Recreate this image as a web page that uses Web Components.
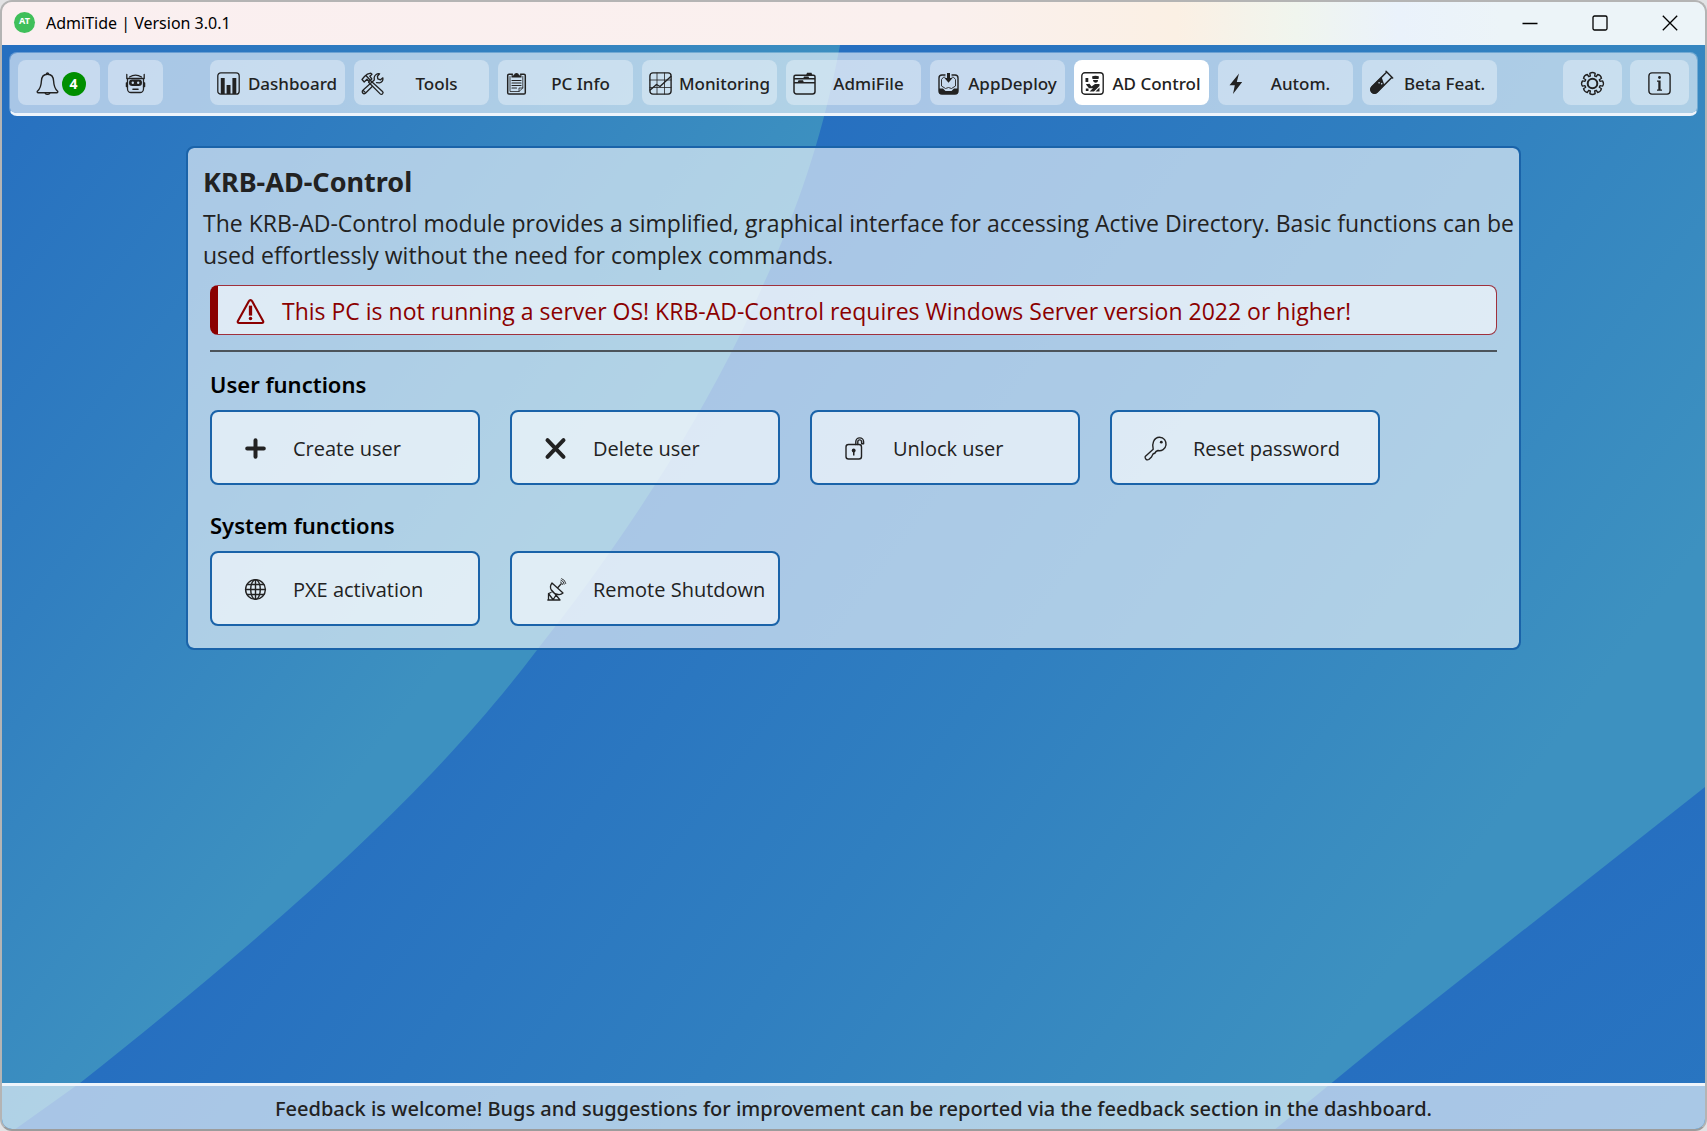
<!DOCTYPE html>
<html lang="en">
<head>
<meta charset="utf-8">
<title>AdmiTide | Version 3.0.1</title>
<style>
  html, body { margin: 0; background: #e2e2e4; }
  body { font-family: "Noto Sans", "Segoe UI", sans-serif; color: #222; }
</style>
</head>
<body>
<at-app>
  <at-titlebar slot="title">AdmiTide | Version 3.0.1</at-titlebar>
  <at-navbar slot="nav">
    <at-nav-button slot="start" icon="bell" label="Notifications" badge="4" size="wide"></at-nav-button>
    <at-nav-button slot="start" icon="robot" label="Assistant" size="narrow"></at-nav-button>
    <at-nav-button icon="chart">Dashboard</at-nav-button>
    <at-nav-button icon="tools">Tools</at-nav-button>
    <at-nav-button icon="clipboard">PC Info</at-nav-button>
    <at-nav-button icon="trend">Monitoring</at-nav-button>
    <at-nav-button icon="filebox">AdmiFile</at-nav-button>
    <at-nav-button icon="inbox">AppDeploy</at-nav-button>
    <at-nav-button icon="control" active>AD Control</at-nav-button>
    <at-nav-button icon="bolt">Autom.</at-nav-button>
    <at-nav-button icon="tube">Beta Feat.</at-nav-button>
    <at-nav-button slot="end" icon="gear" label="Settings" size="medium"></at-nav-button>
    <at-nav-button slot="end" icon="info" label="Information" size="medium"></at-nav-button>
  </at-navbar>
  <at-panel heading="KRB-AD-Control">
    <span slot="intro">The KRB-AD-Control module provides a simplified, graphical interface for accessing Active Directory. Basic functions can be used effortlessly without the need for complex commands.</span>
    <at-alert>This PC is not running a server OS! KRB-AD-Control requires Windows Server version 2022 or higher!</at-alert>
    <at-section heading="User functions">
      <at-action icon="plus">Create user</at-action>
      <at-action icon="cross">Delete user</at-action>
      <at-action icon="unlock">Unlock user</at-action>
      <at-action icon="key">Reset password</at-action>
    </at-section>
    <at-section heading="System functions">
      <at-action icon="globe">PXE activation</at-action>
      <at-action icon="dish">Remote Shutdown</at-action>
    </at-section>
  </at-panel>
  <at-footer slot="footer">Feedback is welcome! Bugs and suggestions for improvement can be reported via the feedback section in the dashboard.</at-footer>
</at-app>

<script>
const S = 'fill="none" stroke="currentColor" stroke-linejoin="round" stroke-linecap="round"';
const ICONS = {
  bell: `<g ${S} stroke-width="1.4"><path d="M11.5 2.2C7.6 2.2 5.6 5 5.4 9C5.2 13.500 4.200 16.800 1.400 19.200C.900 20 1.300 20.800 2.200 20.800H20.800C21.700 20.800 22.100 20 21.600 19.200C18.800 16.800 17.800 13.500 17.600 9C17.400 5 15.400 2.200 11.500 2.200Z"/><path d="M9.300 21.200a2.300 1.700 0 0 0 4.400 0M10.500 2a1 1 0 0 1 2 0"/></g>`,
  robot: `<g ${S} stroke-width="1.3"><path d="M3.500 6.500H19.500V17A3.500 3.500 0 0 1 16 20.500H7A3.500 3.500 0 0 1 3.500 17z"/><path d="M3.500 11H2.400V14.500H3.500M19.500 11H20.600V14.500H19.500M2.800 6.500V2.500M20.200 6.500V2.500M5.500 5C9 2.800 14 2.800 17.500 5"/><path stroke-width="1.600" d="M9 17.300h5"/></g><rect x="5" y="7.500" width="13" height="6.500" rx="3.200" fill="currentColor"/><circle cx="8.800" cy="10.700" r="1.200" fill="#c8dbee"/><circle cx="14.200" cy="10.700" r="1.200" fill="#c8dbee"/>`,
  chart: `<rect x=".8" y=".8" width="21.400" height="21.400" rx="3" ${S} stroke-width="1.300"/><path fill="currentColor" d="M3.800 6h3.900V22h-3.900zM9.600 13h3.900V22h-3.900zM15.400 6h3.900V22h-3.900z"/>`,
  tools: `<g ${S} stroke-width="1.300"><path d="M1 7.500L3.500 4.500C5 2.800 7 1.400 9.800 1.200L11 2.200L8.800 4.200L10.800 7L8 9.600L6 7.200L3.200 10z"/><path d="M9.400 8.600L21.500 19.500A1.600 1.600 0 0 1 19.200 21.900L7.600 10.200"/><path d="M15.500 10.600L18.500 10.800C20.800 10.200 22.200 8.300 21.900 5.800L19.500 7.800L16.800 6.900L16.400 4.200L18.600 1.800C16.100 1.300 13.700 3 13.200 5.300L13.300 7.900L1.900 18.300A1.900 1.900 0 0 0 4.400 21.200L11.200 14.500"/><path d="M5.200 3.700L8.800 7.800M2.500 18.700l1.700 1.700"/></g>`,
  clipboard: `<g ${S} stroke-width="1.500"><path d="M7.500 2.200H4A1.300 1.300 0 0 0 2.700 3.500V20.800A1.300 1.300 0 0 0 4 22.100H19A1.300 1.300 0 0 0 20.300 20.800V3.500A1.300 1.300 0 0 0 19 2.200H15.500"/><path stroke-width=".8" d="M5 4.500V19.500H14L17.800 16V4.500M14 19.500V16H17.800"/><path stroke-width="1.200" d="M7 8.500h9M7 11h9M7 13.500h9M7 16h4.500"/></g><path fill="currentColor" d="M6.500 5.500V3.200H9C9.200.3 13.800.3 14 3.200H16.500V5.500z"/>`,
  trend: `<g ${S} stroke-width="1.400"><rect x=".9" y=".9" width="21.200" height="21.200" rx="3"/><path stroke-width=".8" d="M8 1V22M15.500 1V22M1 8H22M1 15.500H22"/><path d="M1.200 18L7.500 12.500L11 14.500L21.800 4.500"/></g>`,
  filebox: `<g ${S} stroke-width="1.500"><path d="M1 11.800V4.800A1.500 1.500 0 0 1 2.500 3.300H20.500A1.500 1.500 0 0 1 22 4.800V11.800M1 10.800H22V19.500A2.500 2.500 0 0 1 19.500 22H3.500A2.500 2.500 0 0 1 1 19.500zM1.200 6.800H21.800"/></g><path fill="currentColor" d="M13 3.500L14 .8H18.500L19.500 3.500zM10 7L11 4.500H15.500L16.500 7zM4.500 10.800L5.500 8.200H10L11 10.800z"/>`,
  inbox: `<path ${S} stroke-width="1.400" d="M8 3H5A3 3 0 0 0 2 6V19A3 3 0 0 0 5 22H18A3 3 0 0 0 21 19V6A3 3 0 0 0 18 3H15"/><path ${S} stroke-width=".9" d="M8 5.200H6.500L4.500 7.500V14L8.500 16.500L11.500 15.500L14.500 16.500L18.500 14V7.500L16.500 5.200H15"/><path fill="currentColor" d="M2 16.500H6L8.500 19H14.500L17 16.500H21V19A3 3 0 0 1 18 22H5A3 3 0 0 1 2 19zM10 1H13V6H15.500L11.500 10.800L7.500 6H10z"/>`,
  control: `<rect x=".8" y=".8" width="21.400" height="21.400" rx="3" ${S} stroke-width="1.400"/><path fill="currentColor" d="M4.500 6h2.800v4h-2.800zM11 4.500C13 3.500 16 3.500 18 4.500L17.500 7H11.500zM12 8h5c.3 3.500-4.800 3.500-5 0zM4.800 12.200L8.500 11.800L10.500 14.500L14 12H18.500V14L13 19.500H8.500L12 16.200H8zM4.800 16.500H7.500V19H4.800zM18.500 15.500v4h-4z"/>`,
  bolt: `<path fill="currentColor" d="M14 1.500L4.500 13.300H9.800L8 22L17.200 10H11.800z"/>`,
  tube: `<g transform="rotate(45 11.500 11.500)"><path ${S} stroke-width="1.500" d="M6.800 -1H16.200M7.800 0V20A3.700 3.700 0 0 0 15.200 20V0"/><path fill="currentColor" d="M7.400 6L15.600 10V20A4.100 4.100 0 0 1 7.400 20z"/><circle cx="12.500" cy="10.800" r=".8" fill="#cbdeee"/><circle cx="10" cy="12" r=".8" fill="#cbdeee"/></g>`,
  gear: `<g ${S} stroke-width="1.400"><path d="${gearPath()}"/><circle cx="11.500" cy="11.500" r="4.800" stroke-width="2"/></g>`,
  info: `<rect x=".9" y=".9" width="21.200" height="21.200" rx="3" ${S} stroke-width="1.400"/><circle cx="11.500" cy="5.500" r="1.400" fill="currentColor"/><path fill="currentColor" d="M9 8.500h3.600V17.500H14v1.200H9v-1.200h1.300V9.700H9z"/>`,
  warning: `<g ${S} stroke-width="1.800"><path d="M11.500 1.800C12.100 1.800 12.500 2 12.800 2.600L22.200 19.600C22.700 20.600 22.200 21.300 21.200 21.300H1.800C.8 21.300.3 20.600.8 19.600L10.200 2.600C10.500 2 10.900 1.800 11.500 1.800Z"/></g><path fill="currentColor" d="M10.100 6.500h2.800v8.500h-2.800z"/><circle cx="11.500" cy="17.500" r="1.500" fill="currentColor"/>`,
  plus: `<path ${S} stroke-width="4" d="M11.500 3.200V19.800M3.200 11.500H19.800"/>`,
  cross: `<path ${S} stroke-width="4" d="M3.500 3.200L19.500 19.800M19.500 3.200L3.500 19.800"/>`,
  unlock: `<g ${S} stroke-width="1.400"><rect x="2" y="7.500" width="15.500" height="14.500" rx="2.500"/><path d="M11.800 7.500V4.800A3.900 3.900 0 0 1 19.600 4.800V6.800H17.600V4.800A1.900 1.900 0 0 0 13.800 4.800V7.500"/></g><circle cx="9.700" cy="13.500" r="1.900" fill="currentColor"/><path fill="currentColor" d="M9 13.500h1.500v5H9z"/>`,
  key: `<path ${S} stroke-width="1.400" d="M9.200 12.200C7.700 7.500 9.500 .2 15.500 .2C20 .2 22.400 4 22 8C21.500 12 17.500 14.300 14 13.500L12 14.500L11 16L9 17L7.500 20L4.800 22.500C3 23.500.5 22 1.200 19.500z"/><circle cx="17.300" cy="5.200" r="1.400" fill="currentColor"/>`,
  globe: `<g ${S} stroke-width="1.400"><circle cx="11.500" cy="11.500" r="9.900"/><ellipse cx="11.500" cy="11.500" rx="4.800" ry="9.900"/><path d="M11.500 1.600V21.400M1.600 11.500H21.400M3.200 6.500H19.800M3.200 16.500H19.800"/></g>`,
  dish: `<g ${S} stroke-width="1.300"><path d="M8 5C4.500 9.500 7.500 15.500 14 16.500C16 16.800 18 16 19 15L8 5ZM13.500 10L17 6M4.500 22V15.500L7 14.500M3.800 22H16L12 17M7.500 12L12 17L9 22M4.800 16L9 21.500"/><path stroke-width=".9" d="M16.500 4A3 3 0 0 1 18.500 6.500M17 2.200A4.500 4.500 0 0 1 20.200 6.200M17.600.6A6 6 0 0 1 21.800 5.500"/></g>`
};
function gearPath() {
  let d = '';
  for (let i = 0; i < 8; i++) {
    const at = (r, a) => (11.5 + r * Math.cos(a)).toFixed(2) + ' ' + (11.5 + r * Math.sin(a)).toFixed(2);
    const a = i * Math.PI / 4;
    d += (i ? 'L' : 'M') + at(7.8, a - .28) + 'L' + at(10.4, a - .26) + 'Q' + at(11.8, a) + ' ' + at(10.4, a + .26) + 'L' + at(7.8, a + .28);
  }
  return d + 'Z';
}

class Base extends HTMLElement {
  connectedCallback() {
    if (!this.shadowRoot) this.attachShadow({ mode: 'open' }).innerHTML = this.render();
  }
  attr(name) { return this.getAttribute(name) || ''; }
}

customElements.define('at-icon', class extends Base {
  render() {
    return `<style>:host{display:block;width:23px;height:23px;flex:none}svg{display:block;width:100%;height:100%;overflow:visible}</style>
    <svg viewBox="0 0 23 23" aria-hidden="true">${ICONS[this.attr('name')]}</svg>`;
  }
});

customElements.define('at-backdrop', class extends Base {
  render() {
    return `<style>:host{display:block;position:absolute;inset:0;z-index:-1}svg{display:block;width:100%;height:100%}</style>
    <svg viewBox="2 45 1703 1084" preserveAspectRatio="none" aria-hidden="true">
      <defs>
        <linearGradient id="a" gradientUnits="userSpaceOnUse" x1="0" y1="60" x2="570" y2="500"><stop offset="0" stop-color="#266fc0"/><stop offset=".5" stop-color="#317fc0"/><stop offset="1" stop-color="#3d91c0"/></linearGradient>
        <linearGradient id="b" gradientUnits="userSpaceOnUse" x1="850" y1="50" x2="1640" y2="630"><stop offset="0" stop-color="#266fc0"/><stop offset=".5" stop-color="#307fc0"/><stop offset="1" stop-color="#3d91c0"/></linearGradient>
        <linearGradient id="c" gradientUnits="userSpaceOnUse" x1="1546" y1="912" x2="1760" y2="1180"><stop offset="0" stop-color="#266fc0"/><stop offset="1" stop-color="#2a78c1"/></linearGradient>
      </defs>
      <path fill="url(#b)" d="M0 40H1710V1140H0z"/>
      <path fill="url(#a)" d="M0 40H841C817 170 780 250 740 335C690 437 620 545 537 650C450 765 330 885 80 1083L0 1140z"/>
      <path fill="url(#c)" d="M1710 783L1384 1040L1262 1140H1710z"/>
    </svg>`;
  }
});

customElements.define('at-app', class extends Base {
  render() {
    return `<style>
      :host{display:flex;flex-direction:column;box-sizing:border-box;min-height:100vh;border:2px solid #b4b4b4;border-bottom-color:#9c9c9c;border-radius:12px;overflow:hidden}
      .body{flex:1;display:flex;flex-direction:column;position:relative;z-index:0}
      main{flex:1;padding:30px 16px}
    </style>
    <slot name="title"></slot>
    <div class="body"><at-backdrop></at-backdrop><slot name="nav"></slot><main><slot></slot></main><slot name="footer"></slot></div>`;
  }
});

customElements.define('at-titlebar', class extends Base {
  render() {
    return `<style>
      :host{display:flex;align-items:center;height:43px;padding-left:12px;color:#000;background:linear-gradient(90deg,#faeff0 0%,#faf0ee 55%,#fbf0e4 69%,#f0f5ee 76%,#eaf2fb 82%,#ecf4f8 88%)}
      .logo{width:21px;height:21px;border-radius:50%;background:#3fbf5a;color:#fff;font:700 9px/18px "Noto Sans",sans-serif;text-align:center;margin-right:11px}
      .logo,h1,button{margin-bottom:2px}
      h1{flex:1;margin-top:0;font-size:16px;font-weight:400;line-height:22px}
      button{width:70px;height:41px;padding:0;border:0;background:none;display:grid;place-items:center;color:#000}
      svg{width:16px;height:16px;fill:none;stroke:currentColor;stroke-width:1.3}
    </style>
    <span class="logo">AT</span><h1><slot></slot></h1>
    <button aria-label="Minimize"><svg viewBox="0 0 16 16"><path d="M.5 8.500h15"/></svg></button>
    <button aria-label="Maximize"><svg viewBox="0 0 16 16"><rect x="1" y="1" width="14" height="14" rx="1.500"/></svg></button>
    <button aria-label="Close"><svg viewBox="0 0 16 16"><path d="M.8.8l14.400 14.400M15.200.8L.8 15.200"/></svg></button>`;
  }
});

customElements.define('at-navbar', class extends Base {
  render() {
    return `<style>
      :host{display:grid;grid-template-columns:1fr auto 1fr;margin:7px 7px 0;padding:7px 8px 8px;border:1px solid rgba(255,255,255,.3);border-bottom:3px solid #eef4fb;border-radius:8px;background:rgba(255,255,255,.6);background-clip:padding-box}
      div{display:flex;gap:8px}
      .tabs{gap:9px}
      .end{justify-content:flex-end}
    </style>
    <div><slot name="start"></slot></div><div class="tabs"><slot></slot></div><div class="end"><slot name="end"></slot></div>`;
  }
});

customElements.define('at-nav-button', class extends Base {
  render() {
    const label = this.attr('label'), badge = this.attr('badge');
    return `<style>
      :host{display:block;width:135px}
      :host([size=wide]){width:82px}:host([size=narrow]){width:55px}:host([size=medium]){width:59px}
      button{display:flex;align-items:center;box-sizing:border-box;width:100%;height:45px;padding:2px 0 0 7px;border:0;border-radius:8px;background:rgba(255,255,255,.35);color:#222;font:500 17px/24px "Noto Sans",sans-serif;white-space:nowrap}
      :host([size]) button{justify-content:center;gap:3px;padding:2px 0 0}
      :host([size=wide]) button{padding-left:3px}
      :host([active]) button{background:#fff}
      .text{flex:1;text-align:center}
      .badge{width:24px;height:24px;border-radius:50%;background:#008f00;color:#fff;font:700 14px/24px "Noto Sans",sans-serif;text-align:center}
    </style>
    <button${label ? ` aria-label="${label}"` : ''}${this.hasAttribute('active') ? ' aria-current="page"' : ''}><at-icon name="${this.attr('icon')}"></at-icon>${badge ? `<span class="badge">${badge}</span>` : ''}${label ? '' : '<span class="text"><slot></slot></span>'}</button>`;
  }
});

customElements.define('at-panel', class extends Base {
  render() {
    return `<style>
      :host{display:block;box-sizing:border-box;max-width:1335px;margin:0 auto;padding:16px 15px 22px;border:2px solid #1a63a9;border-radius:8px;background:rgba(255,255,255,.6);background-clip:padding-box}
      h2{margin:0 0 7px;font-size:27px;line-height:36px;font-weight:700}
      p{margin:0 -11px 14px 0;font:400 23px/32px "Open Sans",sans-serif}
    </style>
    <h2>${this.attr('heading')}</h2><p><slot name="intro"></slot></p><slot></slot>`;
  }
});

customElements.define('at-alert', class extends Base {
  render() {
    return `<style>
      :host{display:block;margin:0 7px 17px;padding-bottom:15px;border-bottom:2px solid #4c545b}
      div{display:flex;align-items:center;gap:18px;box-sizing:border-box;min-height:50px;padding:2px 19px 0;border:1px solid #a0303c;border-left:8px solid #8b0000;border-radius:8px;background:rgba(255,255,255,.6);background-clip:padding-box;color:#8b0000;font:400 23px/32px "Open Sans",sans-serif}
      at-icon{width:27px;height:27px}
    </style>
    <div role="alert"><at-icon name="warning"></at-icon><span><slot></slot></span></div>`;
  }
});

customElements.define('at-section', class extends Base {
  render() {
    return `<style>
      :host{display:block;margin:0 7px}
      :host(:not(:last-child)){margin-bottom:25px}
      h3{margin:0 0 11px;color:#000;font-size:22px;line-height:30px;font-weight:600}
      div{display:flex;flex-wrap:wrap;gap:30px}
    </style>
    <h3>${this.attr('heading')}</h3><div><slot></slot></div>`;
  }
});

customElements.define('at-action', class extends Base {
  render() {
    return `<style>
      :host{display:block;width:270px}
      button{display:flex;align-items:center;gap:26px;box-sizing:border-box;width:100%;height:75px;padding:2px 0 0 32px;border:2px solid #1a63a9;border-radius:8px;background:rgba(255,255,255,.6);background-clip:padding-box;color:#222;font:400 20px/27px "Open Sans",sans-serif;white-space:nowrap}
    </style>
    <button><at-icon name="${this.attr('icon')}"></at-icon><span><slot></slot></span></button>`;
  }
});

customElements.define('at-footer', class extends Base {
  render() {
    return `<style>:host{display:block;padding:9px 16px 7px;border-top:3px solid #eef4fb;background:rgba(255,255,255,.6);background-clip:padding-box;font-weight:500;font-size:20px;line-height:27px;text-align:center}</style><slot></slot>`;
  }
});
</script>
</body>
</html>
